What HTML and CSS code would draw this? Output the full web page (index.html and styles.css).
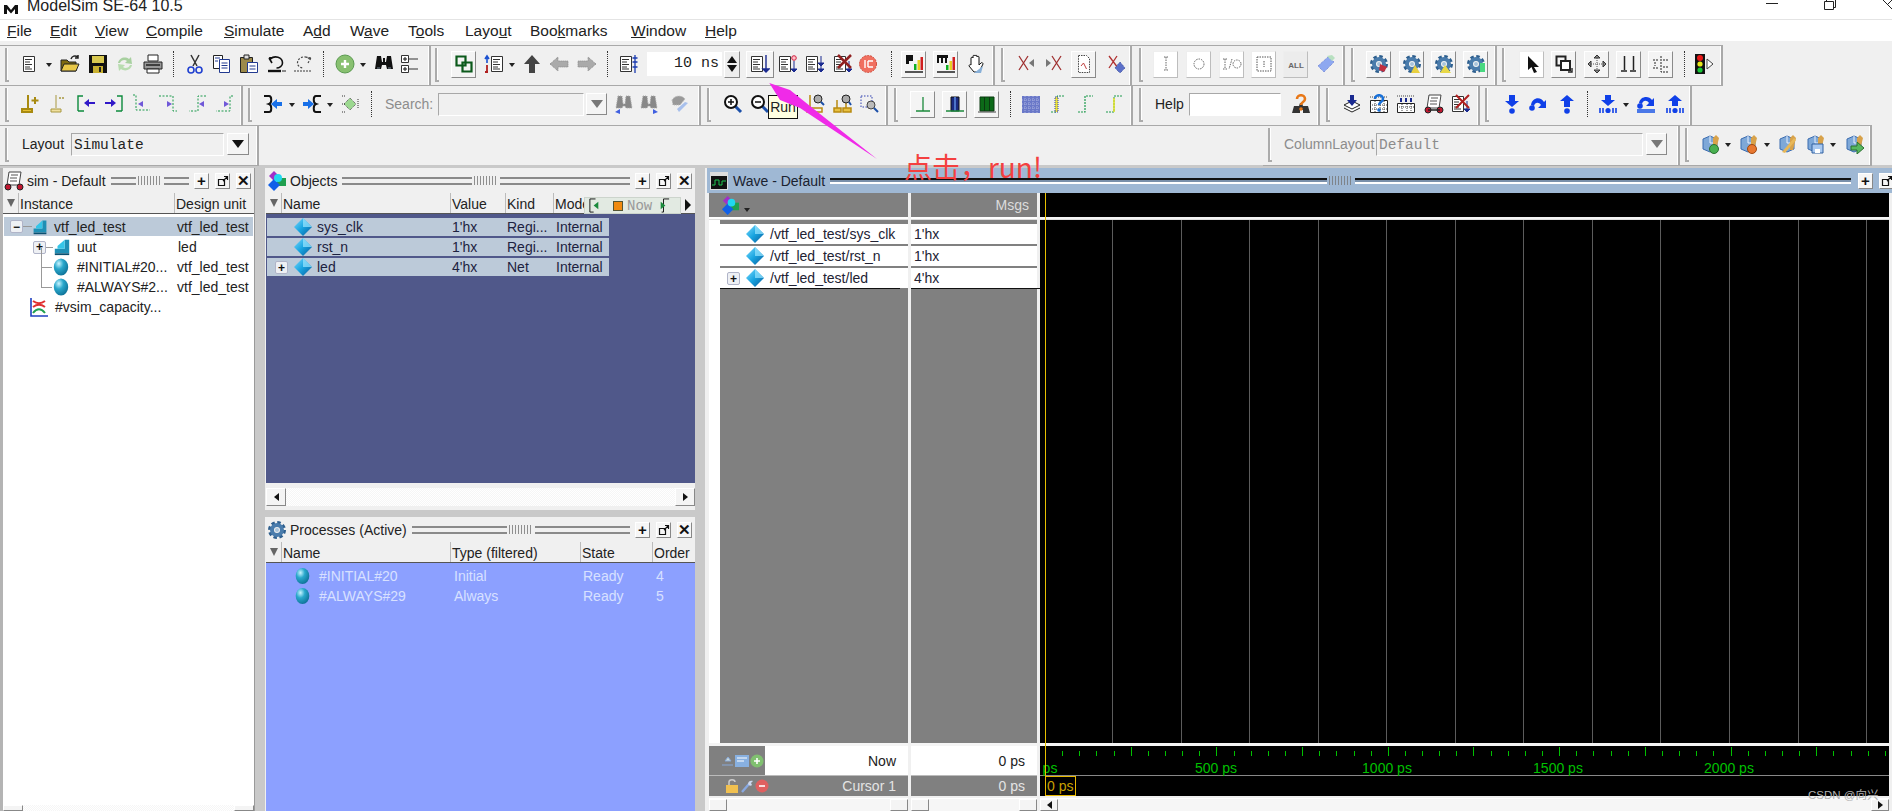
FILE: index.html
```html
<!DOCTYPE html>
<html lang="en">
<head>
<meta charset="utf-8">
<title>ModelSim SE-64 10.5</title>
<link rel="stylesheet" href="styles.css">
</head>
<body>
<svg class="defs" width="0" height="0">
<defs>
<radialGradient id="gb" cx=".35" cy=".3" r=".8"><stop offset="0" stop-color="#c8f4ff"/><stop offset=".4" stop-color="#2aa8cc"/><stop offset="1" stop-color="#0a6a90"/></radialGradient>
<linearGradient id="gd" x1="0" y1="0" x2="1" y2="1"><stop offset="0" stop-color="#7fdcff"/><stop offset=".5" stop-color="#18a4e0"/><stop offset="1" stop-color="#0a5a9a"/></linearGradient>
<symbol id="ball" viewBox="0 0 20 20"><ellipse cx="10" cy="10" rx="8" ry="9.5" fill="url(#gb)"/></symbol>
<symbol id="dia" viewBox="0 0 20 20"><path d="M10 1 19 10 10 19 1 10Z" fill="url(#gd)"/><path d="M10 1 19 10H10Z" fill="#9be6ff" opacity=".7"/></symbol>
<symbol id="inst" viewBox="0 0 20 20"><path d="M13 2h5v15H2v-5h11Z" fill="#1f8fb5"/><path d="M5 9l8-7v10H5Z" fill="#35c5e8"/><path d="M2 17h16v2H2Z" fill="#0a4f70"/></symbol>
<symbol id="sdoc" viewBox="0 0 20 20"><path d="M1.500 2.500h11v15h-11Z" fill="#fff" stroke="#333"/><path d="M3 5.500h7M3 8h5M3 10.500h7M3 13h5M3 15h7" stroke="#333"/></symbol>
<symbol id="gear" viewBox="0 0 20 20"><circle cx="10" cy="10" r="7" fill="none" stroke="#2e5f8e" stroke-width="4" stroke-dasharray="3.200 2.300"/><circle cx="10" cy="10" r="5" fill="none" stroke="#4a7cac" stroke-width="4"/><circle cx="10" cy="10" r="2" fill="#a8c4dc"/></symbol>
<symbol id="mag" viewBox="0 0 20 20"><path d="M11 11l7 7" stroke="#1b4fa8" stroke-width="3"/><circle cx="8" cy="8" r="6" fill="#fff" stroke="#111" stroke-width="2"/></symbol>
<symbol id="cube" viewBox="0 0 20 20"><path d="M3 5l7-3 7 3v10l-7 3-7-3Z" fill="#7ea8d8" stroke="#3b6cb0"/><path d="M10 2v7l7 0" fill="none" stroke="#e8f0ff"/><path d="M13 4l3-3 3 3-3 12h-3Z" fill="#d8a24a"/></symbol>
</defs>
</svg>

<header class="titlebar">
  <svg class="appicon" viewBox="0 0 16 10"><path d="M1 10V1h3l4 5 4-5h3v9h-3V5L8 9.500 4 5v5Z" fill="#111"/></svg>
  <span class="apptitle">ModelSim SE-64 10.5</span>
  <span class="winctl">
    <svg class="w-min" viewBox="0 0 12 10"><path d="M0 3.500h12" stroke="#222"/></svg>
    <svg class="w-res" viewBox="0 0 12 10"><path d="M.5 1.500h9v8h-9ZM2.500 1.500V0M9.500 7.500h2V0" fill="none" stroke="#222"/></svg>
    <svg class="w-cls" viewBox="0 0 10 10"><path d="M0 0l9 9M9 0 4 5" stroke="#222"/></svg>
  </span>
</header>

<nav class="menubar">
  <span class="mi mi-file"><u>F</u>ile</span><span class="mi mi-edit"><u>E</u>dit</span><span class="mi mi-view"><u>V</u>iew</span><span class="mi mi-comp"><u>C</u>ompile</span><span class="mi mi-sim"><u>S</u>imulate</span><span class="mi mi-add">A<u>d</u>d</span><span class="mi mi-wave">W<u>a</u>ve</span><span class="mi mi-tools">T<u>o</u>ols</span><span class="mi mi-layout">Layo<u>u</u>t</span><span class="mi mi-book">Boo<u>k</u>marks</span><span class="mi mi-win"><u>W</u>indow</span><span class="mi mi-help"><u>H</u>elp</span>
</nav>

<section class="toolbars">
  <div class="tbrow row1">
    <div class="grp">
      <i class="grip m5"></i>
      <svg class="ic m11" viewBox="0 0 20 20"><use href="#sdoc" x="2" width="20" height="20"/></svg><b class="dd m6"></b>
      <svg class="ic m8" viewBox="0 0 20 20"><path d="M1 6h6l2 2h7v9H1Z" fill="#7d6a10" stroke="#222"/><path d="M4 10h15l-3 7H1Z" fill="#e8c848" stroke="#222"/><path d="M11 5c1-3 4-4 7-2M18 1v3h-3" fill="none" stroke="#222" stroke-width="1.500"/></svg>
      <svg class="ic m8" viewBox="0 0 20 20"><path d="M1 1h18v18H1Z" fill="#111"/><path d="M4 2h12v7H4Z" fill="#d8c850"/><path d="M5 12h10v7H5Z" fill="#c8b030"/><path d="M11 13h2v5h-2Z" fill="#222"/></svg>
      <svg class="ic m7" viewBox="0 0 20 20"><path d="M3 9c1-5 7-7 11-4l2-2 1 7-7-1 2-2c-2-2-6-1-7 2Z" fill="#a8d0a0"/><path d="M17 11c-1 5-7 7-11 4l-2 2-1-7 7 1-2 2c2 2 6 1 7-2Z" fill="#b8dcb0"/></svg>
      <svg class="ic m8" viewBox="0 0 20 20"><path d="M5 1h10v6H5Z" fill="#fff" stroke="#222"/><path d="M1 8h18v7H1Z" fill="#999" stroke="#222"/><path d="M4 15h12v4H4Z" fill="#fff" stroke="#222"/><path d="M3 11h14" stroke="#222" stroke-width="1.500"/></svg>
      <i class="sep m10"></i>
      <svg class="ic m11" viewBox="0 0 20 20"><path d="M6 1l6 11M14 1 8 12" stroke="#333" stroke-width="1.500"/><circle cx="6" cy="16" r="3" fill="none" stroke="#2040d0" stroke-width="1.600"/><circle cx="14" cy="16" r="3" fill="none" stroke="#2040d0" stroke-width="1.600"/></svg>
      <svg class="ic m7" viewBox="0 0 20 20"><path d="M1.500 1.500h9v13h-9Z" fill="#fff" stroke="#222"/><path d="M7.500 5.500h10v13h-10Z" fill="#fff" stroke="#223a90"/><path d="M9.500 9h6M9.500 11.500h6M9.500 14h6M3 4h5M3 7h3" stroke="#223a90"/></svg>
      <svg class="ic m7" viewBox="0 0 20 20"><path d="M1.500 3.500h12v15h-12Z" fill="#9c8a4a" stroke="#222"/><path d="M5 1h5v4H5Z" fill="#ddd" stroke="#222"/><path d="M8.500 8.500h10v10h-10Z" fill="#fff" stroke="#223a90"/><path d="M10.500 12h6M10.500 15h6" stroke="#223a90"/></svg>
      <svg class="ic m8" viewBox="0 0 20 20"><path d="M5 9 2 4M2 4l6-1M3.500 5c4-4 12-2 12 4 0 3-3 5-6 5" fill="none" stroke="#111" stroke-width="1.600"/><path d="M1 17h13" stroke="#111" stroke-width="2.400"/><path d="M15 17h4" stroke="#888" stroke-width="2"/></svg>
      <svg class="ic m6" viewBox="0 0 20 20"><path d="M15 9l3-5M18 4l-6-1M16.500 5c-4-4-12-2-12 4 0 3 3 5 6 5" fill="none" stroke="#444" stroke-dasharray="2 1.500" stroke-width="1.200"/><path d="M1 17h18" stroke="#777" stroke-dasharray="2 1" stroke-width="1.400"/></svg>
      <i class="sep m10"></i>
      <svg class="ic m11" viewBox="0 0 20 20"><circle cx="10" cy="10" r="9" fill="#88c070" stroke="#5a9a50"/><path d="M10 6v8M6 10h8" stroke="#fff" stroke-width="2.400"/></svg><b class="dd m5"></b>
      <svg class="ic m8" viewBox="0 0 20 20"><path d="M3 2h4l1 6 1 0V4h2v4l1 0 1-6h4l2 13H13l-1-4H8l-1 4H1Z" fill="#111"/><path d="M3 14h3M14 14h3" stroke="#789"/></svg>
      <svg class="ic m6" viewBox="0 0 20 20"><path d="M1.500 1.500h7v7h-7ZM1.500 11.500h7v7h-7Z" fill="#fff" stroke="#333"/><path d="M3 5h4M5 3v4M3 15h4M5 13v4" stroke="#111"/><path d="M9 5h9M9 15h9" stroke="#333"/></svg>
    </div>
    <div class="grp">
      <i class="grip m4"></i>
      <span class="btn m12"><svg class="ic" viewBox="0 0 20 20"><path d="M2.500 2.500h9v9h-9ZM8.500 8.500h9v9h-9Z" fill="none" stroke="#0c5a1c" stroke-width="2.200"/></svg></span>
      <svg class="ic m8" viewBox="0 0 20 20"><use href="#sdoc" x="6" width="20" height="20"/><path d="M3 9V3M1 5l2-3 2 3" fill="none" stroke="#1a50d0" stroke-width="1.600"/><path d="M3 11v7M1 18h3" stroke="#b02020" stroke-width="1.800"/></svg><b class="dd m5"></b>
      <svg class="ic m7" viewBox="0 0 20 20"><path d="M10 1l8 9h-5v9H7v-9H2Z" fill="#444"/></svg>
      <svg class="ic m7" viewBox="0 0 20 20"><path d="M1 10l8-7v4h10v6H9v4Z" fill="#aaa" stroke="#888" stroke-dasharray="1 1"/></svg>
      <svg class="ic m8" viewBox="0 0 20 20"><path d="M19 10l-8-7v4H1v6h10v4Z" fill="#aaa" stroke="#888" stroke-dasharray="1 1"/></svg>
      <i class="sep m10"></i>
      <svg class="ic m11" viewBox="0 0 20 20"><use href="#sdoc" width="20" height="20"/><path d="M16 1v18M13.500 4h5M13.500 8h5M13.500 13h5" stroke="#1a3ab0" stroke-width="1.300"/></svg>
      <span class="runlen m8">10 ns</span>
      <span class="spin m2"><i class="sp-up"></i><i class="sp-dn"></i></span>
      <span class="btn wide m6"><svg class="ic" viewBox="0 0 20 20"><use href="#sdoc" width="20" height="20"/><path d="M16 1v16M13 15h6l-3 3Z" stroke="#1a2a90" fill="#1a2a90" stroke-width="1.400"/></svg></span>
      <svg class="ic m4" viewBox="0 0 20 20"><use href="#sdoc" width="20" height="20"/><path d="M16 7v10M13 15h6l-3 3Z" stroke="#1a2a90" fill="#1a2a90"/><circle cx="16" cy="4" r="2.300" fill="#ffc0c8" stroke="#d02040"/></svg>
      <svg class="ic m7" viewBox="0 0 20 20"><use href="#sdoc" width="20" height="20"/><path d="M16 2v14M13 9h6l-3 3ZM13 15h6l-3 3Z" stroke="#1a2a90" fill="#1a2a90"/></svg>
      <svg class="ic m8" viewBox="0 0 20 20"><use href="#sdoc" width="20" height="20"/><path d="M16 7v10M13 15h6l-3 3Z" stroke="#1a2a90" fill="#1a2a90"/><path d="M5 1l13 13M18 1 5 14" stroke="#902020" stroke-width="2.500"/></svg>
      <svg class="ic m5" viewBox="0 0 20 20"><circle cx="10" cy="10" r="8.500" fill="#f07060" stroke="#d04838" stroke-dasharray="2 1"/><path d="M7 6v8M10 7h5M10 13h5M10 7v6" stroke="#fff" stroke-width="1.400"/></svg>
      <i class="sep m13"></i>
      <span class="btn m9"><svg class="ic" viewBox="0 0 20 20"><path d="M2 1h7v6H5v3H2Z" fill="#111"/><path d="M10 10h2.500v6H10Z" fill="#10b020"/><path d="M13.500 6H16v10h-2.500Z" fill="#e8d020"/><path d="M16.500 3H19v13h-2.500Z" fill="#d02020"/><path d="M1 17h18v2H1Z" fill="#555"/></svg></span>
      <span class="btn m7"><svg class="ic" viewBox="0 0 20 20"><path d="M1 1h11v3h-1v5H9V4H7v5H5V4H3v5H1Z" fill="#111"/><path d="M10 11h2.500v5H10Z" fill="#10b020"/><path d="M13.500 7H16v9h-2.500Z" fill="#e8d020"/><path d="M16.500 3H19v13h-2.500Z" fill="#d02020"/><path d="M1 17h18v2H1Z" fill="#555"/></svg></span>
      <svg class="ic m8" viewBox="0 0 20 20"><path d="M5 11V4c0-1 2-1 2 0V2c0-1 2-1 2 0v0c0-1 2-1 2 0v1c0-1 2-1 2 0v8l2-2c1-1 2 0 2 1l-4 8H8l-5-6c0-1 1-2 2-1Z" fill="#fff" stroke="#111"/><path d="M8 19l9-7-2 7Z" fill="#88b0d8"/></svg>
    </div>
    <div class="grp">
      <i class="grip m6"></i>
      <svg class="ic m12" viewBox="0 0 20 20"><path d="M2 2l9 14M11 2 2 16" stroke="#a03030" stroke-width="1.300"/><path d="M12 9l5-4v8Z" fill="#777"/></svg>
      <svg class="ic m6" viewBox="0 0 20 20"><path d="M9 2l9 14M18 2 9 16" stroke="#a03030" stroke-width="1.300"/><path d="M8 9 3 5v8Z" fill="#777"/></svg>
      <span class="btn m8"><svg class="ic" viewBox="0 0 20 20"><path d="M4.500 1.500h8l3 3v14h-11Z" fill="#fff" stroke="#444" stroke-dasharray="1.500 1"/><path d="M7 12l2.500-3 3 6" fill="none" stroke="#c04040"/></svg></span>
      <svg class="ic m11" viewBox="0 0 20 20"><path d="M2 2l9 12M10 2 2 14" stroke="#b03030" stroke-width="1.300"/><path d="M8 14l5-6 5 6-5 5Z" fill="#5c70c8" stroke="#3a4ea0" stroke-dasharray="1 1"/></svg>
    </div>
    <div class="grp">
      <i class="grip m7"></i>
      <span class="sbox m10"><svg class="ic" viewBox="0 0 20 20"><path d="M10 3v13M8 3h4M8 16h4" stroke="#666" stroke-dasharray="1.500 1"/></svg></span>
      <span class="sbox m8"><svg class="ic" viewBox="0 0 20 20"><circle cx="10" cy="10" r="5" fill="none" stroke="#666" stroke-dasharray="1.500 1"/></svg></span>
      <span class="sbox m8"><svg class="ic" viewBox="0 0 20 20"><path d="M3 5v10M1 5h4M1 15h4M10 5 7 15" stroke="#666" stroke-dasharray="1.500 1" fill="none"/><circle cx="15" cy="10" r="4" fill="none" stroke="#666" stroke-dasharray="1.500 1"/></svg></span>
      <span class="sbox m7"><svg class="ic" viewBox="0 0 20 20"><path d="M3 3h14v14H3Z M10 7v6" fill="none" stroke="#555" stroke-dasharray="1.500 1"/></svg></span>
      <span class="sbox grey m7"><svg class="ic" viewBox="0 0 20 20"><text x="10" y="14" class="alltxt" text-anchor="middle">ALL</text></svg></span>
      <svg class="ic m8" viewBox="0 0 20 20"><path d="M2 12 12 3l6 5-10 10Z" fill="#8ea8f0" stroke="#6a80d8" stroke-dasharray="1 1"/><path d="M11 2l5-1 3 3-3 3Z" fill="#b8e0c0"/></svg>
    </div>
    <div class="grp">
      <i class="grip m6"></i>
      <span class="btn m11"><svg class="ic" viewBox="0 0 20 20"><use href="#gear" width="20" height="20"/><path d="M11 10l7 3-3 5-5-2Z" fill="#c03040"/></svg></span>
      <span class="btn m8"><svg class="ic" viewBox="0 0 20 20"><use href="#gear" width="20" height="20"/><path d="M13 11l5 8h-9Z" fill="#e8d040"/></svg></span>
      <span class="btn m7"><svg class="ic" viewBox="0 0 20 20"><use href="#gear" width="20" height="20"/><path d="M11 11l6 8H6Z" fill="#e8d848"/></svg></span>
      <span class="btn m7"><svg class="ic" viewBox="0 0 20 20"><use href="#gear" width="20" height="20"/><path d="M14 9h5v9h-5Z" fill="#48d880"/></svg></span>
    </div>
    <div class="grp">
      <i class="grip m5"></i>
      <span class="sbox m13"><svg class="ic" viewBox="0 0 20 20"><path d="M6 2v14l3.500-3 2.500 6 3-1-3-5h5Z" fill="#111"/></svg></span>
      <span class="btn m7"><svg class="ic" viewBox="0 0 20 20"><path d="M2.500 2.500h9v9h-9Z" fill="none" stroke="#222" stroke-width="2"/><path d="M7 7h9v9H7Z" fill="#fff" stroke="#222" stroke-width="2"/><path d="M14 18h4v-4" stroke="#222" stroke-width="1.400" fill="none"/></svg></span>
      <span class="btn m8"><svg class="ic" viewBox="0 0 20 20"><path d="M10 1l3 3H7ZM10 19l3-3H7ZM1 10l3-3v6ZM19 10l-3-3v6Z" fill="#888" stroke="#333"/><path d="M10 4v12M4 10h12" stroke="#555" stroke-dasharray="1 1"/></svg></span>
      <span class="btn m7"><svg class="ic" viewBox="0 0 20 20"><path d="M5.500 2v14M14.500 2v14M2 17h6M11 17h6" stroke="#222" stroke-width="1.500"/></svg></span>
      <span class="btn m7"><svg class="ic" viewBox="0 0 20 20"><path d="M2 6h5M2 14h5M4 8v4M10 2v16h8M12 6h5M12 13h5" stroke="#222" fill="none" stroke-dasharray="2 1"/></svg></span>
      <i class="sep m11"></i>
      <svg class="ic m9" viewBox="0 0 20 20"><path d="M1 0h10v20H1Z" fill="#111"/><circle cx="6" cy="4" r="3" fill="#e81818"/><circle cx="6" cy="10" r="2.600" fill="#e8e818"/><circle cx="6" cy="16" r="2.600" fill="#18c838"/><path d="M13 5l6 5-6 5Z" fill="#fff" stroke="#444"/></svg>
    </div>
  </div>

  <div class="tbrow row2">
    <div class="grp">
      <i class="grip m5"></i>
      <svg class="ic m12" viewBox="0 0 20 20"><path d="M7 1v13M1 15h10v3H1Z" stroke="#a88a10" stroke-width="2" fill="#e8c030"/><path d="M14 3v7M10.500 6.500h7" stroke="#a88a10" stroke-width="2"/></svg>
      <svg class="ic m7" viewBox="0 0 20 20"><path d="M8 1v13M3 15h10v3H3Z" stroke="#a89840" fill="#f0e0a0"/><path d="M11 4h5" stroke="#a89840" stroke-width="1.500" stroke-dasharray="2 1"/></svg>
      <svg class="ic m8" viewBox="0 0 20 20"><path d="M2 17V2h5M2 17h6" fill="none" stroke="#0c8a3c" stroke-width="1.400"/><path d="M8 9l5-4v3h6v2h-6v3Z" fill="#3018c8"/></svg>
      <svg class="ic m8" viewBox="0 0 20 20"><path d="M18 17V2h-5M18 17h-6" fill="none" stroke="#0c8a3c" stroke-width="1.400"/><path d="M12 9 7 5v3H1v2h6v3Z" fill="#3018c8"/></svg>
      <svg class="ic m7" viewBox="0 0 20 20"><path d="M2 1h3v15h14" fill="none" stroke="#1c9a4c" stroke-dasharray="2 1.500"/><path d="M7 10l5-3v6Z" fill="#7058d8"/></svg>
      <svg class="ic m7" viewBox="0 0 20 20"><path d="M1 2h14v15h4" fill="none" stroke="#1c9a4c" stroke-dasharray="2 1.500"/><path d="M14 10l-5-3v6Z" fill="#7058d8"/></svg>
      <svg class="ic m9" viewBox="0 0 20 20"><path d="M19 2h-8v15H2" fill="none" stroke="#1c9a4c" stroke-dasharray="2 1.500"/><path d="M12 10l5-3v6Z" fill="#7058d8"/></svg>
      <svg class="ic m7" viewBox="0 0 20 20"><path d="M19 2h-3v15H2" fill="none" stroke="#1c9a4c" stroke-dasharray="2 1.500"/><path d="M15 10l-5-3v6Z" fill="#7058d8"/></svg>
    </div>
    <div class="grp">
      <i class="grip m5"></i>
      <svg class="ic m11" viewBox="0 0 20 20"><path d="M1 2h5c3 0 3 7 0 8 3 1 3 8 0 8H1" fill="none" stroke="#111" stroke-width="2"/><path d="M8 10l6-5v3h5v4h-5v3Z" fill="#1870e8"/></svg><b class="dd m6"></b>
      <svg class="ic m7" viewBox="0 0 20 20"><path d="M19 2h-5c-3 0-3 7 0 8-3 1-3 8 0 8h5" fill="none" stroke="#111" stroke-width="2"/><path d="M12 10 6 5v3H1v4h5v3Z" fill="#1870e8"/></svg><b class="dd m5"></b>
      <svg class="ic m7" viewBox="0 0 20 20"><path d="M10 4l6 6-6 6-6-6Z" fill="#9cd890" stroke="#555" stroke-dasharray="1 1"/><path d="M2 2h4M2 18h4M2 10h3M18 5v10" stroke="#333" stroke-dasharray="1 1"/></svg>
      <i class="sep m11"></i>
      <span class="lbl dim search m13">Search:</span>
      <span class="field fld-search m7"></span>
      <span class="combo m2"><svg class="combo-ic" viewBox="0 0 12 8"><path d="M0 0h12L6 8Z" fill="#777"/></svg></span>
      <svg class="ic m7" viewBox="0 0 20 20"><path d="M4 2h4l1 8h2l1-8h4l2 12h-6l-1-2H9l-1 2H2Z" fill="#888" stroke="#aaa" stroke-dasharray="1 1"/><path d="M1 18l5-3v5Z" fill="#4060e0"/></svg>
      <svg class="ic m5" viewBox="0 0 20 20"><path d="M4 2h4l1 8h2l1-8h4l2 12h-6l-1-2H9l-1 2H2Z" fill="#888" stroke="#aaa" stroke-dasharray="1 1"/><path d="M19 18l-5-3v5Z" fill="#4060e0"/></svg>
      <svg class="ic m11" viewBox="0 0 20 20"><path d="M2 6c3-5 10-5 13-1l-5 6-7 0Z" fill="#999" stroke="#bbb" stroke-dasharray="1 1"/><path d="M9 18l9-9-3-1-8 7Z" fill="#a8c0ec"/></svg>
    </div>
    <div class="grp">
      <i class="grip m6"></i>
      <svg class="ic m12" viewBox="0 0 20 20"><use href="#mag" width="20" height="20"/><path d="M8 5v6M5 8h6" stroke="#111" stroke-width="1.500"/></svg>
      <svg class="ic m7" viewBox="0 0 20 20"><use href="#mag" width="20" height="20"/><path d="M5 8h6" stroke="#111" stroke-width="1.500"/></svg>
      <svg class="ic m8" viewBox="0 0 20 20"><use href="#mag" width="20" height="20"/></svg>
      <svg class="ic m8" viewBox="0 0 20 20"><path d="M4 1v13h11M1 14h15v4H1Z" stroke="#b88a10" fill="none" stroke-width="1.500"/><circle cx="12" cy="5" r="4" fill="#aaa" stroke="#222"/><path d="M15 8l3 3" stroke="#1b4fa8" stroke-width="2"/></svg>
      <svg class="ic m7" viewBox="0 0 20 20"><path d="M4 6v8M13 6v8M1 14h7v4H1ZM10 14h8v4h-8Z" stroke="#b88a10" fill="#e8c040" stroke-width="1.500"/><circle cx="13" cy="5" r="4" fill="#aaa" stroke="#222"/><path d="M16 8l2 3" stroke="#1b4fa8" stroke-width="2"/></svg>
      <svg class="ic m7" viewBox="0 0 20 20"><path d="M1 2h11v11H1Z" fill="none" stroke="#3040b0" stroke-dasharray="1.500 1.500"/><circle cx="11" cy="11" r="4" fill="#bbb" stroke="#444"/><path d="M14 14l4 4" stroke="#1b4fa8" stroke-width="2"/></svg>
    </div>
    <div class="grp">
      <i class="grip m6"></i>
      <span class="btn m12"><svg class="ic" viewBox="0 0 20 20"><path d="M10 3v14M3 17h14" stroke="#1c8a3c" stroke-width="1.300"/></svg></span>
      <span class="btn m7"><svg class="ic" viewBox="0 0 20 20"><path d="M6 3h8v14H6Z" fill="#1a2a80" stroke="#111"/><path d="M9 3h2v14H9Z" fill="#4c74c8"/><path d="M1 17h18" stroke="#1c8a3c" stroke-width="1.500"/></svg></span>
      <span class="btn m7"><svg class="ic" viewBox="0 0 20 20"><path d="M3 3h14v14H3Z" fill="#0c6a18" stroke="#0a3a10"/><path d="M7.500 3v14M12.500 3v14" stroke="#0a3a10"/><path d="M1 18h18" stroke="#444"/></svg></span>
      <i class="sep m11"></i>
      <svg class="ic m10" viewBox="0 0 20 20"><path d="M1 2h18v17H1Z" fill="#6a78c8"/><path d="M4 2v17M8 2v17M12 2v17M16 2v17M1 6h18M1 10h18M1 14h18" stroke="#a8b0e0" stroke-dasharray="1 1"/></svg>
      <svg class="ic m8" viewBox="0 0 20 20"><path d="M2 18h6V2h8" fill="none" stroke="#1c9a4c" stroke-dasharray="2 1"/><path d="M6 3h3v15H6Z" fill="#e8e040" stroke="#3040b0" stroke-dasharray="1 1"/></svg>
      <svg class="ic m7" viewBox="0 0 20 20"><path d="M2 18h7V2h8" fill="none" stroke="#1c9a4c" stroke-dasharray="2 1" stroke-width="1.200"/></svg>
      <svg class="ic m8" viewBox="0 0 20 20"><path d="M2 18h8V2h8" fill="none" stroke="#1c9a4c" stroke-dasharray="2 1"/><path d="M10 4v14" stroke="#e0e020" stroke-width="1.500"/></svg>
    </div>
    <div class="grp">
      <i class="grip m6"></i>
      <span class="lbl help m12">Help</span>
      <span class="field fld-help m6"></span>
      <svg class="ic m10" viewBox="0 0 20 20"><path d="M3 12h5l1-3h2l1 3h5l2 7h-7v-3H9v3H1Z" fill="#333"/><path d="M6 5c0-5 8-5 8 0 0 3-4 3-4 6" fill="none" stroke="#e87818" stroke-width="2.600"/><circle cx="10" cy="15" r="1.800" fill="#e87818"/></svg>
    </div>
    <div class="grp">
      <i class="grip m6"></i>
      <svg class="ic m12" viewBox="0 0 20 20"><path d="M2 11l8-4 8 4-8 4ZM2 14l8 4 8-4" fill="#fff" stroke="#222"/><path d="M8 1h4v5h3l-5 6-5-6h3Z" fill="#1a2a90"/></svg>
      <svg class="ic m7" viewBox="0 0 20 20"><path d="M1.500 6.500h17v12h-17Z" fill="#fff" stroke="#222"/><path d="M1 11h18M1 15h18M6 7v12M11 7v12M15 7v12M1 3h18" stroke="#444" stroke-dasharray="1 1"/><path d="M6 5c0-5 8-5 8 0 0 3-4 3-4 6" fill="none" stroke="#1870d8" stroke-width="2.600"/><circle cx="10" cy="16" r="1.800" fill="#1870d8"/></svg>
      <svg class="ic m7" viewBox="0 0 20 20"><path d="M1.500 9.500h17v9h-17Z" fill="#fff" stroke="#222"/><path d="M1 13h18M6 10v9M11 10v9M15 10v9M1 2h18" stroke="#444" stroke-dasharray="1 1"/><path d="M5 4v4M10 4v4M15 4v4" stroke="#1a2a90" stroke-width="2"/></svg>
      <svg class="ic m8" viewBox="0 0 20 20"><path d="M5 1h12l-2 13H3Z" fill="#fff" stroke="#444"/><path d="M7 4h7M6 7h7M6 10h7" stroke="#555"/><circle cx="4" cy="16" r="3" fill="#c01830" stroke="#222"/><circle cx="16" cy="16" r="3" fill="#c01830" stroke="#222"/><path d="M4 16h12" stroke="#222" stroke-width="1.500"/></svg>
      <svg class="ic m7" viewBox="0 0 20 20"><use href="#sdoc" width="20" height="20"/><path d="M16 7v10M13 15h6l-3 3Z" stroke="#1a2a90" fill="#1a2a90"/><path d="M5 1l13 13M18 1 5 14" stroke="#b02020" stroke-width="2"/></svg>
    </div>
    <div class="grp">
      <i class="grip m5"></i>
      <svg class="ic m13" viewBox="0 0 20 20"><path d="M7 1h6v6h4l-7 6-7-6h4Z" fill="#1040e8"/><circle cx="10" cy="17" r="2.800" fill="#1040e8"/></svg>
      <svg class="ic m6" viewBox="0 0 20 20"><path d="M3 11c1-8 10-9 13-3l2-2v8h-8l3-3c-2-3-6-3-7 1Z" fill="#1040e8"/><circle cx="4" cy="14" r="2.800" fill="#1040e8"/></svg>
      <svg class="ic m9" viewBox="0 0 20 20"><path d="M7 13h6V7h4l-7-6-7 6h4Z" fill="#1040e8"/><circle cx="10" cy="17" r="2.800" fill="#1040e8"/></svg>
      <i class="sep m10"></i>
      <svg class="ic m10" viewBox="0 0 20 20"><path d="M7 1h6v5h4l-7 6-7-6h4Z" fill="#1040e8"/><path d="M2 14v5M5 14v5M15 14v5M18 14v5" stroke="#1040e8" stroke-width="1.600"/><circle cx="10" cy="16.500" r="2.600" fill="#1040e8"/></svg><b class="dd m5"></b>
      <svg class="ic m7" viewBox="0 0 20 20"><path d="M3 9c1-7 10-8 13-3l2-2v8h-8l3-3c-2-3-6-3-7 1Z" fill="#1040e8"/><circle cx="4" cy="12" r="2.800" fill="#1040e8"/><path d="M1 15h18v4H1Z" fill="#4a78e8"/></svg>
      <svg class="ic m9" viewBox="0 0 20 20"><path d="M7 12h6V7h4l-7-6-7 6h4Z" fill="#1040e8"/><path d="M2 14v5M5 14v5M15 14v5M18 14v5" stroke="#1040e8" stroke-width="1.600"/><circle cx="10" cy="16.500" r="2.600" fill="#1040e8"/></svg>
    </div>
  </div>

  <div class="tbrow row3">
    <div class="grp">
      <i class="grip m5"></i>
      <span class="lbl layout-l m13">Layout</span>
      <span class="field mono fld-layout m7">Simulate</span>
      <span class="combo big m3"><svg class="combo-ic" viewBox="0 0 12 8"><path d="M0 0h12L6 8Z" fill="#111"/></svg></span>
    </div>
    <div class="blank"></div>
    <div class="grp">
      <i class="grip m5"></i>
      <span class="lbl dim collay m12">ColumnLayout</span>
      <span class="field mono dim fld-col m6">Default</span>
      <span class="combo m3"><svg class="combo-ic" viewBox="0 0 12 8"><path d="M0 0h12L6 8Z" fill="#777"/></svg></span>
    </div>
    <div class="grp">
      <i class="grip m5"></i>
      <svg class="ic m11" viewBox="0 0 20 20"><use href="#cube" width="20" height="20"/><circle cx="14" cy="15" r="4.500" fill="#48b050" stroke="#2a7030"/></svg><b class="dd m5"></b>
      <svg class="ic m7" viewBox="0 0 20 20"><use href="#cube" width="20" height="20"/><circle cx="14" cy="15" r="4.500" fill="#e87830" stroke="#a04810"/></svg><b class="dd m6"></b>
      <svg class="ic m7" viewBox="0 0 20 20"><use href="#cube" width="20" height="20"/><path d="M5 18 17 4l2 2L8 19Z" fill="#e8b858"/></svg>
      <svg class="ic m8" viewBox="0 0 20 20"><use href="#cube" width="20" height="20"/><path d="M7 10h11v9H7Z" fill="#a8c8f0" stroke="#3060a0"/><path d="M10 15h5v4h-5Z" fill="#fff"/></svg><b class="dd m5"></b>
      <svg class="ic m8" viewBox="0 0 20 20"><use href="#cube" width="20" height="20"/><path d="M7 12h6V8l7 6-7 6v-4H7Z" fill="#58b860" stroke="#2a7030"/></svg>
    </div>
  </div>
</section>

<main class="workspace">
  <section class="panel sim">
    <div class="ptitle">
      <svg class="pic" viewBox="0 0 20 20"><path d="M5 1h12l-2 13H3Z" fill="#fff" stroke="#444"/><path d="M7 4h7M6 7h7M6 10h7" stroke="#555"/><circle cx="4" cy="16" r="3" fill="#c01830" stroke="#222"/><circle cx="16" cy="16" r="3" fill="#c01830" stroke="#222"/></svg>
      <span class="pname">sim - Default</span>
      <span class="dock"><i></i><em></em><i></i></span>
      <span class="pbtns"><b class="pb">+</b><b class="pb"><svg viewBox="0 0 12 12"><path d="M1.500 4.500h6v6h-6ZM6 6l4.500-4.500M7 1.500h3.500V5" fill="none" stroke="#111" stroke-width="1.200"/></svg></b><b class="pb">✕</b></span>
    </div>
    <div class="thead">
      <span class="th tcol"><i class="hdtri"></i></span><span class="th c-inst">Instance</span><span class="th c-du">Design unit</span>
    </div>
    <div class="tree">
      <div class="tr sel"><span class="treebox minus t-l1">−</span><i class="hline h1"></i><svg class="tic i1" viewBox="0 0 20 20"><use href="#inst" width="20" height="20"/></svg><span class="tn t1">vtf_led_test</span><span class="du">vtf_led_test</span></div>
      <div class="tr"><span class="treebox t-l2">+</span><i class="hline h2"></i><svg class="tic" viewBox="0 0 20 20"><use href="#inst" width="20" height="20"/></svg><span class="tn t2">uut</span><span class="du">led</span></div>
      <div class="tr"><i class="elbow"></i><svg class="tic" viewBox="0 0 20 20"><use href="#ball" width="20" height="20"/></svg><span class="tn t3">#INITIAL#20...</span><span class="du">vtf_led_test</span></div>
      <div class="tr"><i class="elbow"></i><svg class="tic" viewBox="0 0 20 20"><use href="#ball" width="20" height="20"/></svg><span class="tn t3">#ALWAYS#2...</span><span class="du">vtf_led_test</span></div>
      <div class="tr"><svg class="tic cap" viewBox="0 0 20 20"><path d="M2 1v18h17" fill="none" stroke="#2040c0" stroke-width="1.600"/><path d="M4 4c4 3 8 3 12 0M4 10c4-3 8-3 12 0" fill="none" stroke="#e03030" stroke-width="2"/><path d="M4 16c4-5 8-5 12 0" fill="none" stroke="#20a050" stroke-width="2"/></svg><span class="tn t4">#vsim_capacity...</span></div>
    </div>
    <div class="hscroll simscroll"><b class="sb"></b><b class="sb"></b></div>
  </section>

  <div class="midcol">
    <section class="panel objects">
      <div class="ptitle">
        <svg class="pic" viewBox="0 0 20 20"><path d="M7 0l5 5-5 5-5-5Z" fill="#a030c8"/><path d="M10 7h9v8h-9Z" fill="#20a050"/><path d="M7 8l6 6-6 6-6-6Z" fill="#1060e8"/><circle cx="11" cy="7" r="4" fill="#20d8f0"/></svg>
        <span class="pname">Objects</span>
        <span class="dock"><i></i><em></em><i></i></span>
        <span class="pbtns"><b class="pb">+</b><b class="pb"><svg viewBox="0 0 12 12"><path d="M1.500 4.500h6v6h-6ZM6 6l4.500-4.500M7 1.500h3.500V5" fill="none" stroke="#111" stroke-width="1.200"/></svg></b><b class="pb">✕</b></span>
      </div>
      <div class="thead o-head">
        <span class="th tcol"><i class="hdtri"></i></span><span class="th o-name">Name</span><span class="th o-val">Value</span><span class="th o-kind">Kind</span><span class="th o-mode">Mode</span>
      </div>
      <div class="nowbar">
        <svg class="nb-ic" viewBox="0 0 16 16"><path d="M2 1h6M2 1v14M2 15h4" stroke="#111" fill="none"/><path d="M6 8l5-4v8Z" fill="#1a8a3c"/></svg>
        <i class="nb-square"></i><span class="nb-now">Now</span>
        <svg class="nb-ic" viewBox="0 0 16 16"><path d="M14 1h-6v14H6" stroke="#111" fill="none"/><path d="M10 8 5 4v8Z" fill="#1a8a3c"/></svg>
      </div>
      <i class="nb-tri"></i>
      <div class="obody">
        <div class="orow"><svg class="odia" viewBox="0 0 20 20"><use href="#dia" width="20" height="20"/></svg><span class="on">sys_clk</span><span class="ov">1'hx</span><span class="ok">Regi...</span><span class="om">Internal</span></div>
        <div class="orow"><svg class="odia" viewBox="0 0 20 20"><use href="#dia" width="20" height="20"/></svg><span class="on">rst_n</span><span class="ov">1'hx</span><span class="ok">Regi...</span><span class="om">Internal</span></div>
        <div class="orow"><span class="treebox obox">+</span><svg class="odia" viewBox="0 0 20 20"><use href="#dia" width="20" height="20"/></svg><span class="on">led</span><span class="ov">4'hx</span><span class="ok">Net</span><span class="om">Internal</span></div>
      </div>
      <div class="hscroll objscroll"><b class="sb"><i class="al"></i></b><b class="sb"><i class="ar"></i></b></div>
    </section>

    <section class="panel processes">
      <div class="ptitle">
        <svg class="pic" viewBox="0 0 20 20"><use href="#gear" width="20" height="20"/></svg>
        <span class="pname">Processes (Active)</span>
        <span class="dock"><i></i><em></em><i></i></span>
        <span class="pbtns"><b class="pb">+</b><b class="pb"><svg viewBox="0 0 12 12"><path d="M1.500 4.500h6v6h-6ZM6 6l4.500-4.500M7 1.500h3.500V5" fill="none" stroke="#111" stroke-width="1.200"/></svg></b><b class="pb">✕</b></span>
      </div>
      <div class="thead o-head">
        <span class="th tcol"><i class="hdtri"></i></span><span class="th o-name">Name</span><span class="th p-type">Type (filtered)</span><span class="th p-state">State</span><span class="th p-ord">Order</span>
      </div>
      <div class="pbody">
        <div class="prow"><svg class="pball" viewBox="0 0 20 20"><use href="#ball" width="20" height="20"/></svg><span class="pn">#INITIAL#20</span><span class="pt">Initial</span><span class="ps">Ready</span><span>4</span></div>
        <div class="prow"><svg class="pball" viewBox="0 0 20 20"><use href="#ball" width="20" height="20"/></svg><span class="pn">#ALWAYS#29</span><span class="pt">Always</span><span class="ps">Ready</span><span>5</span></div>
      </div>
    </section>
  </div>

  <section class="wavepanel">
    <div class="wtitle">
      <svg class="wic" viewBox="0 0 18 18"><path d="M0 0h18v18H0Z" fill="#ddd"/><path d="M1 4h16v13H1Z" fill="#111"/><path d="M2 13h3V8h4v5h3V9h4" fill="none" stroke="#1ec850"/></svg>
      <span class="pname">Wave - Default</span>
      <span class="dock wdock"><i></i><em></em><i></i></span>
      <span class="pbtns wbtns"><b class="pb">+</b><b class="pb"><svg viewBox="0 0 12 12"><path d="M1.500 4.500h6v6h-6ZM6 6l4.500-4.500M7 1.500h3.500V5" fill="none" stroke="#111" stroke-width="1.200"/></svg></b></span>
    </div>
    <div class="wbody">
      <div class="wcol wnames">
        <div class="whead"><svg class="whead-ic" viewBox="0 0 20 20"><path d="M7 0l5 5-5 5-5-5Z" fill="#a030c8"/><path d="M10 7h9v8h-9Z" fill="#20a050"/><path d="M7 8l6 6-6 6-6-6Z" fill="#1060e8"/><circle cx="11" cy="7" r="4" fill="#20d8f0"/></svg><b class="dd whead-dd"></b></div>
        <div class="wsep"></div>
        <div class="wlist">
          <div class="wrow"><svg class="wdia" viewBox="0 0 20 20"><use href="#dia" width="20" height="20"/></svg><span>/vtf_led_test/sys_clk</span></div>
          <div class="wrow"><svg class="wdia" viewBox="0 0 20 20"><use href="#dia" width="20" height="20"/></svg><span>/vtf_led_test/rst_n</span></div>
          <div class="wrow"><span class="treebox wbox">+</span><svg class="wdia" viewBox="0 0 20 20"><use href="#dia" width="20" height="20"/></svg><span>/vtf_led_test/led</span></div>
          <div class="wend"></div>
        </div>
        <div class="wsep2"></div>
        <div class="wnow"><span class="wtools"><svg class="wt" viewBox="0 0 14 14"><path d="M2 11h11M5 7l3-4 3 4Z" stroke="#88a8d8" fill="#cdd"/></svg><svg class="wt" viewBox="0 0 14 14"><path d="M0 1h14v12H0Z" fill="#88b0e0"/><path d="M2 4h10M2 7h7" stroke="#fff"/></svg><svg class="wt" viewBox="0 0 14 14"><circle cx="7" cy="7" r="6.500" fill="#80c070"/><path d="M7 4v6M4 7h6" stroke="#fff" stroke-width="1.600"/></svg></span><span class="wnlabel">Now</span></div>
        <div class="wcur"><span class="wtools cur"><svg class="wt" viewBox="0 0 14 14"><path d="M1 6h12v8H1Z" fill="#f0c050"/><path d="M4 6V3c0-3 6-3 6 0" fill="none" stroke="#ccc" stroke-width="1.500"/></svg><svg class="wt" viewBox="0 0 14 14"><path d="M2 13l7-8" stroke="#88a8e0" stroke-width="2.400"/><path d="M8 5c0-3 3-4 5-3l-2 2 1 2c-1 1-3 1-4-1Z" fill="#ccd8f0"/></svg><svg class="wt" viewBox="0 0 14 14"><circle cx="7" cy="7" r="6.500" fill="#e06060"/><path d="M4 7h6" stroke="#fff" stroke-width="1.600"/></svg></span><span class="wclabel">Cursor 1</span></div>
        <div class="wscroll"><b class="sb"></b><b class="sb"></b></div>
      </div>
      <div class="wcol wvals">
        <div class="whead msgs">Msgs</div>
        <div class="wsep"></div>
        <div class="wlist">
          <div class="wrow"><span>1'hx</span></div>
          <div class="wrow"><span>1'hx</span></div>
          <div class="wrow"><span>4'hx</span></div>
          <div class="wend"></div>
        </div>
        <div class="wsep2"></div>
        <div class="wnow vnow">0 ps</div>
        <div class="wcur vcur">0 ps</div>
        <div class="wscroll"><b class="sb"></b><b class="sb"></b></div>
      </div>
      <div class="wcol wplot">
        <div class="phead"></div>
        <div class="wsep"></div>
        <div class="pgrid"><i class="gridlines"></i></div>
        <div class="wsep2"></div>
        <div class="timeline">
          <i class="ticks minor"></i><i class="ticks major"></i>
          <span class="tlabel tl0">ps</span><span class="tlabel tl1">500 ps</span><span class="tlabel tl2">1000 ps</span><span class="tlabel tl3">1500 ps</span><span class="tlabel tl4">2000 ps</span>
        </div>
        <div class="curlane"><span class="curbox">0 ps</span></div>
        <div class="wscroll"><b class="sb"><i class="al"></i></b><b class="sb"><i class="ar"></i></b></div>
        <i class="cursorline"></i>
      </div>
    </div>
  </section>
</main>

<span class="tooltip">Run</span>
<svg class="arrow" viewBox="0 0 120 90"><path d="M9.300 5 30 12 50 28 117 81 40 30 20 22Z" fill="#f02ae8"/></svg>
<span class="note">点击，run!</span>
<span class="watermark">CSDN @向兴</span>
</body>
</html>
```

FILE: styles.css
```css
* { box-sizing: border-box; }
html, body { margin: 0; height: 100%; }
body {
  position: relative;
  width: 1892px;
  height: 811px;
  overflow: hidden;
  background: #f0f0f0;
  font-family: "Liberation Sans", Arial, sans-serif;
  font-size: 14px;
  color: #222;
}
.defs { position: absolute; }
i, b { font-style: normal; display: block; flex: none; }

/* title + menu */
.titlebar { display: flex; height: 20px; background: #fff; align-items: flex-start; border-bottom: 1px solid #e4e4e4; }
.appicon { width: 16px; height: 10px; margin: 4px 0 0 3px; flex: none; }
.apptitle { font-size: 16px; line-height: 11px; margin-left: 8px; color: #222; }
.winctl { margin-left: auto; display: flex; }
.w-min { width: 12px; height: 10px; margin-right: 46px; }
.w-res { width: 12px; height: 10px; margin-right: 47px; }
.w-cls { width: 10px; height: 10px; margin-right: -1px; }
.menubar { display: flex; height: 21px; background: #fff; align-items: center; font-size: 15.5px; padding-left: 7px; color: #222; }
.mi { flex: none; line-height: 21px; }
.mi-file { width: 43px; }
.mi-edit { width: 45px; }
.mi-view { width: 51px; }
.mi-comp { width: 78px; }
.mi-sim { width: 79px; }
.mi-add { width: 47px; }
.mi-wave { width: 58px; }
.mi-tools { width: 57px; }
.mi-layout { width: 65px; }
.mi-book { width: 101px; }
.mi-win { width: 74px; }

/* toolbars */
.toolbars { padding-top: 4px; background: #f0f0f0; }
.tbrow { display: grid; height: 40px; }
.row1 { grid-template-columns: 431px 564px 137px 213px 152px 226px; }
.row2 { grid-template-columns: 243px 458px 187px 245px 187px 160px 212px; }
.row3 { grid-template-columns: 259px 1004px 417px 192px; }
.grp {
  display: flex;
  align-items: center;
  border-top: 1px solid #a9a9a9;
  border-right: 2px solid #a9a9a9;
  border-bottom: 1px solid #a9a9a9;
  background: #f0f0f0;
  min-width: 0;
  box-shadow: inset -1px 0 0 #fff;
  padding-bottom: 3px;
}
.grip { width: 4px; height: 34px; border-left: 2px solid #ababab; border-bottom: 2px solid #ababab; box-shadow: inset 1px 0 0 #fff; margin-top: 2px; }
.ic { width: 20px; height: 20px; flex: none; display: block; }
.dd { width: 0; height: 0; border-left: 3.5px solid transparent; border-right: 3.5px solid transparent; border-top: 4px solid #222; margin-top: 2px; }
.sep { width: 1px; height: 26px; border-left: 1px dotted #333; }
.btn, .sbox {
  width: 25px; height: 27px; flex: none;
  display: flex; align-items: center; justify-content: center;
  background: #f4f4f4;
  border: 1px solid;
  border-color: #fff #8a8a8a #8a8a8a #fff;
}
.wide { width: 28px; }
.sbox { background: #fff; border-color: #eee #bdbdbd #bdbdbd #eee; }
.sbox.grey { background: #ececec; }
.alltxt { font-size: 8px; font-family: "Liberation Sans", sans-serif; fill: #666; font-weight: 700; }
.m2 { margin-left: 2px; } .m3 { margin-left: 3px; } .m4 { margin-left: 4px; } .m5 { margin-left: 5px; }
.m6 { margin-left: 6px; } .m7 { margin-left: 7px; } .m8 { margin-left: 8px; } .m9 { margin-left: 9px; }
.m10 { margin-left: 10px; } .m11 { margin-left: 11px; } .m12 { margin-left: 12px; } .m13 { margin-left: 13px; }
.runlen {
  width: 75px; height: 24px; flex: none; background: #fff;
  font-family: "Liberation Mono", monospace; font-size: 15px;
  text-align: right; line-height: 24px; padding-right: 3px; color: #222;
}
.spin { width: 16px; height: 27px; flex: none; border: 1px solid; border-color: #fff #888 #888 #fff; display: flex; flex-direction: column; align-items: center; justify-content: space-around; background: #eee; padding: 3px 0; }
.sp-up { border-left: 5px solid transparent; border-right: 5px solid transparent; border-bottom: 7px solid #111; }
.sp-dn { border-left: 5px solid transparent; border-right: 5px solid transparent; border-top: 7px solid #111; }
.lbl { flex: none; font-size: 14px; }
.dim { color: #8c8c8c; }
.search { width: 46px; }
.help { width: 28px; color: #222; }
.layout-l { width: 42px; }
.collay { width: 86px; }
.field {
  flex: none; height: 23px; background: #f0f0f0; display: block;
  border: 1px solid; border-color: #a8a8a8 #fff #fff #a8a8a8;
}
.fld-search { width: 146px; }
.fld-help { width: 92px; background: #fff; }
.fld-layout { width: 153px; }
.fld-col { width: 267px; }
.mono { font-family: "Liberation Mono", monospace; font-size: 14.5px; line-height: 23px; padding-left: 2px; color: #222; }
.mono.dim { color: #8c8c8c; }
.combo { width: 21px; height: 22px; flex: none; display: flex; align-items: center; justify-content: center; background: #f4f4f4; border: 1px solid; border-color: #fff #8a8a8a #8a8a8a #fff; }
.combo.big { width: 22px; }
.combo-ic { width: 12px; height: 8px; display: block; }

/* workspace */
.workspace { display: flex; height: 646px; background: #c9c9c9; padding-top: 3px; overflow: hidden; }
.panel { background: #f0f0f0; display: flex; flex-direction: column; position: relative; }
.sim { width: 255px; margin-right: 10px; border-left: 3px solid #b4b4b4; border-right: 1px solid #9a9a9a; height: 643px; }
.midcol { width: 430px; margin-right: 10px; display: flex; flex-direction: column; height: 643px; }
.objects { height: 342px; margin-bottom: 7px; padding-left: 1px; flex: none; }
.processes { flex: 1; padding-left: 1px; }
.ptitle { display: flex; align-items: center; height: 25px; flex: none; padding-left: 1px; background: #f0f0f0; }
.pic { width: 20px; height: 20px; flex: none; }
.pname { font-size: 14px; margin-left: 3px; flex: none; white-space: nowrap; color: #222; }
.dock { flex: 1; display: flex; align-items: center; margin: 0 5px; height: 14px; }
.dock i { flex: 1; height: 8px; border-top: 2px solid #8a8a8a; border-bottom: 2px solid #8a8a8a; }
.dock em { width: 24px; height: 9px; margin: 0 2px; background: repeating-linear-gradient(90deg, #777 0 1px, transparent 1px 3px); opacity: .8; flex: none; }
.pbtns { display: flex; gap: 6px; padding-right: 3px; flex: none; }
.pb { width: 15px; height: 16px; display: flex; align-items: center; justify-content: center; background: #f6f6f6; border: 1px solid; border-color: #fff #888 #888 #fff; font-size: 15px; line-height: 1; font-weight: 700; color: #111; }
.pb svg { width: 12px; height: 12px; display: block; }
.thead { display: flex; height: 21px; border-bottom: 1px solid #555; flex: none; background: #f0f0f0; align-items: stretch; }
.th { font-size: 14px; line-height: 23px; padding-left: 1px; border-right: 1px solid #bbb; flex: none; white-space: nowrap; overflow: hidden; color: #222; }
.tcol { width: 16px; display: flex; align-items: center; justify-content: center; padding: 0; }
.hdtri { border-left: 4px solid transparent; border-right: 4px solid transparent; border-top: 8px solid #666; }
.c-inst { width: 156px; }
.c-du { flex: 1; border-right: 0; }

.tree { flex: 1; background: #fff; padding-top: 3px; }
.tr { display: flex; align-items: center; height: 20px; position: relative; white-space: nowrap; color: #222; }
.tr.sel { background: #bccad9; margin: 0 1px; height: 19px; margin-bottom: 1px; }
.treebox { width: 13px; height: 13px; flex: none; display: flex; align-items: center; justify-content: center; background: #eef0f4; border: 1px solid #b0b4c8; border-radius: 2px; font-size: 12px; line-height: 1; font-weight: 700; color: #111; }
.t-l1 { margin-left: 6px; }
.t-l2 { margin-left: 30px; }
.hline { height: 1px; background: #999; }
.h1 { width: 9px; }
.h2 { width: 7px; }
.elbow { width: 11px; height: 20px; margin-left: 38px; border-left: 1px solid #999; border-bottom: 1px solid #999; align-self: flex-start; margin-top: -9px; }
.tic { width: 18px; height: 18px; flex: none; }
.tic.i1 { width: 16px; height: 16px; }
.tic.cap { width: 20px; height: 20px; margin-left: 26px; }
.tn { flex: none; color: #222; }
.t1 { width: 123px; margin-left: 6px; }
.t2 { width: 101px; margin-left: 6px; }
.t3 { width: 100px; margin-left: 7px; }
.t4 { margin-left: 6px; }
.du { color: #222; }
.hscroll { display: flex; justify-content: space-between; height: 18px; flex: none; background: repeating-conic-gradient(#f6f6f6 0 25%, #fff 0 50%) 0 0/2px 2px; }
.simscroll { height: 6px; }
.sb { width: 20px; height: 100%; background: #f4f4f4; border: 1px solid; border-color: #fff #888 #888 #fff; display: flex; align-items: center; justify-content: center; }
.al { border-top: 4px solid transparent; border-bottom: 4px solid transparent; border-right: 5px solid #111; }
.ar { border-top: 4px solid transparent; border-bottom: 4px solid transparent; border-left: 5px solid #111; }

.o-name { width: 169px; }
.o-val { width: 55px; }
.o-kind { width: 48px; }
.o-mode { flex: 1; border-right: 0; }
.p-type { width: 130px; }
.p-state { width: 72px; }
.p-ord { flex: 1; border-right: 0; }
.nowbar { position: absolute; left: 319px; top: 29px; width: 97px; height: 17px; background: #e2eae2; display: flex; align-items: center; border: 1px solid #ccd4cc; padding: 0 3px; }
.nb-ic { width: 15px; height: 15px; flex: none; }
.nb-square { width: 10px; height: 10px; background: #f08a10; border: 1px solid #553; margin-left: 10px; }
.nb-now { font-family: "Liberation Mono", monospace; font-size: 14px; color: #999; margin: 0 4px 0 4px; }
.nb-tri { position: absolute; left: 420px; top: 31px; border-top: 6px solid transparent; border-bottom: 6px solid transparent; border-left: 6px solid #111; }
.obody { flex: 1; background: #50588a; padding: 4px 0 0 1px; margin-bottom: 5px; display: flex; flex-direction: column; gap: 2px; }
.orow { display: flex; align-items: center; width: 342px; height: 18px; flex: none; background: #bccad9; position: relative; color: #1c2240; white-space: nowrap; }
.odia { width: 20px; height: 20px; position: absolute; left: 26px; top: -1px; }
.obox { position: absolute; left: 8px; top: 3px; }
.on { margin-left: 50px; width: 135px; }
.ov { width: 55px; }
.ok { width: 49px; }
.objscroll { margin-bottom: 4px; }
.pbody { flex: 1; background: #8ca0ff; padding-top: 3px; color: #d8e0ff; }
.prow { display: flex; align-items: center; height: 20px; white-space: nowrap; }
.pball { width: 17px; height: 18px; margin-left: 28px; flex: none; }
.pn { margin-left: 8px; width: 135px; flex: none; }
.pt { width: 129px; flex: none; }
.ps { width: 73px; flex: none; }

/* wave */
.wavepanel { flex: 1; background: #f0f0f0; display: flex; flex-direction: column; min-width: 0; height: 643px; }
.wtitle { display: flex; align-items: center; height: 25px; margin-left: 2px; background: #9fb8d4; padding-left: 3px; flex: none; }
.wic { width: 18px; height: 18px; flex: none; }
.wtitle .pname { margin-left: 5px; color: #1a2230; }
.wdock { margin: 0 7px 0 5px; }
.wdock i { border-top: 2px solid #111; border-bottom: 2px solid #fff; background: #7a90aa; height: 6px; }
.wbtns { padding-right: 0; margin-right: -2px; }
.wbody { flex: 1; display: flex; padding-left: 4px; gap: 3px; min-height: 0; }
.wcol { display: flex; flex-direction: column; flex: none; position: relative; min-height: 0; }
.wnames { width: 199px; }
.wvals { width: 126px; }
.wplot { width: 849px; }
.whead { height: 24px; background: #808080; flex: none; display: flex; align-items: center; position: relative; }
.whead-ic { width: 19px; height: 19px; margin-left: 12px; }
.whead-dd { margin-left: 4px; margin-top: 10px; }
.msgs { justify-content: flex-end; padding-right: 8px; color: #dcdcdc; font-size: 14px; }
.wsep { height: 3px; background: #fff; flex: none; box-shadow: inset 0 -1px 0 #ddd; }
.wlist { flex: 1; background: #808080; padding-top: 4px; display: flex; flex-direction: column; gap: 2px; position: relative; min-height: 0; }
.wnames .wlist { border-left: 11px solid #fff; }
.wrow { height: 20px; background: #fff; display: flex; align-items: center; white-space: nowrap; position: relative; color: #223; flex: none; padding-bottom: 1px; }
.wvals .wrow { padding-left: 3px; }
.wdia { width: 20px; height: 20px; margin: 0 5px 0 25px; flex: none; }
.wbox { position: absolute; left: 7px; top: 4px; z-index: 1; }
.wend { height: 1px; width: 180px; background: #111; margin-top: -2px; }
.wsep2 { height: 3px; background: #f4f4f4; flex: none; }
.wnow { height: 29px; background: #fff; display: flex; align-items: center; flex: none; color: #222; }
.wtools { width: 56px; height: 100%; background: #808080; display: flex; align-items: center; justify-content: flex-end; padding-right: 1px; flex: none; gap: 1px; }
.wtools.cur { background: none; padding-right: 0; width: 60px; }
.wt { width: 14px; height: 14px; flex: none; }
.wnlabel { margin-left: auto; padding-right: 12px; }
.wcur { height: 21px; background: #808080; display: flex; align-items: center; color: #e4e4e4; flex: none; border-top: 1px solid #bbb; }
.wclabel { margin-left: auto; padding-right: 12px; }
.vnow, .vcur { justify-content: flex-end; padding-right: 12px; }
.wscroll { height: 13px; flex: none; display: flex; justify-content: space-between; margin-top: 2px; background: #f6f6f6; border-top: 1px solid #fff; }
.wscroll .sb { width: 18px; }
.phead { height: 24px; background: #000; flex: none; }
.pgrid { flex: 1; background: #000; position: relative; min-height: 0; }
.gridlines { position: absolute; left: 72px; right: 0; top: 0; bottom: 0; background: repeating-linear-gradient(90deg, #5c5c5c 0 1px, transparent 1px 68.56px); }
.wplot .wsep, .wplot .wsep2 { background: #f4f4f4; }
.timeline { height: 29px; background: #000; flex: none; position: relative; }
.ticks { position: absolute; left: 5px; right: 0; }
.minor { top: 5px; height: 5px; background: repeating-linear-gradient(90deg, #00c000 0 1px, transparent 1px 17.14px); }
.major { top: 1px; height: 9px; background: repeating-linear-gradient(90deg, #00c000 0 1px, transparent 1px 85.7px); }
.tlabel { position: absolute; top: 14px; color: #00c000; font-size: 14px; line-height: 16px; transform: translateX(-50%); white-space: nowrap; }
.tl0 { left: 10px; }
.tl1 { left: 176px; }
.tl2 { left: 347px; }
.tl3 { left: 518px; }
.tl4 { left: 689px; }
.curlane { height: 21px; background: #000; flex: none; border-top: 1px solid #888; }
.curbox { display: block; margin-left: 5px; width: 31px; height: 20px; border: 1px solid #e8b800; color: #c8a000; font-size: 14px; line-height: 18px; padding-left: 1px; white-space: nowrap; overflow: hidden; }
.cursorline { position: absolute; left: 5px; top: 0; height: 584px; width: 1px; background: #e8c000; }

/* overlays */
.tooltip { position: absolute; left: 768px; top: 95px; width: 30px; height: 24px; background: #ffffe1; border: 1px solid #111; font-size: 14px; line-height: 22px; text-align: center; color: #222; }
.arrow { position: absolute; left: 760px; top: 78px; width: 120px; height: 90px; }
.note { position: absolute; left: 904px; top: 150px; font-family: "Noto Sans CJK SC", "Liberation Sans", sans-serif; font-size: 28px; line-height: 32px; color: #f44040; white-space: nowrap; }
.watermark { position: absolute; left: 1808px; top: 787px; font-family: "Liberation Sans", "Noto Sans CJK SC", sans-serif; font-size: 11.500px; line-height: 16px; color: #b0b0b0; white-space: nowrap; }
```
